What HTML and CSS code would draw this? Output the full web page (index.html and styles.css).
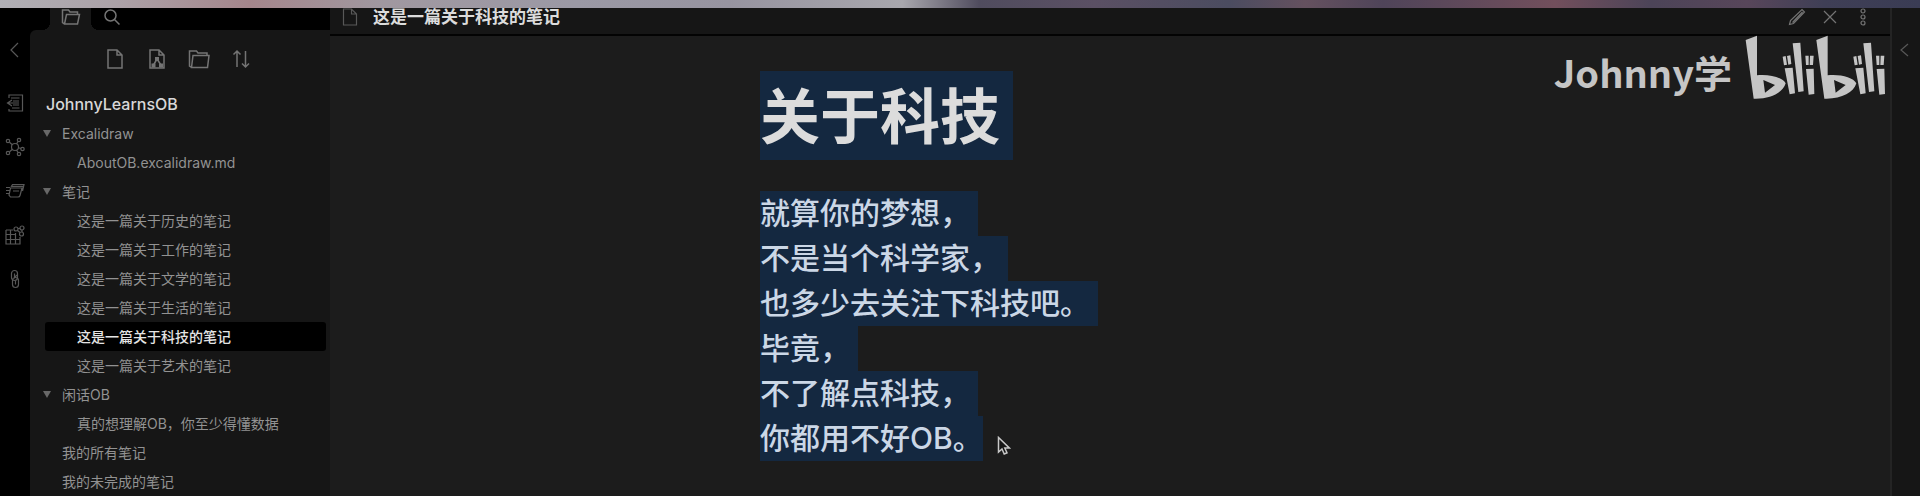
FILE: index.html
```
<!DOCTYPE html>
<html lang="zh-CN">
<head>
<meta charset="utf-8">
<title>这是一篇关于科技的笔记</title>
<link rel="stylesheet" href="styles.css">
</head>
<body>
<div class="desktop-strip"></div>
<div class="app">
  <nav class="ribbon" aria-label="功能区">
    <button class="icon-btn ribbon-toggle" aria-label="收起侧栏"><svg class="icon dim" width="18" height="18" viewBox="0 0 18 18"><path d="M12 2 5 9l7 7"/></svg></button>
    <button class="icon-btn" aria-label="快速切换"><svg class="icon dim" width="18" height="20" viewBox="0 0 18 20"><path d="M3 5V2h13.500v16H3v-2M5 5h8.500M6 15h7.500M7 8h6M7 10h6M7 12h6M6 7l-4.500 3L6 13M1.500 10H7"/></svg></button>
    <button class="icon-btn" aria-label="关系图谱"><svg class="icon dim" width="20" height="20" viewBox="0 0 20 20"><circle cx="10" cy="10" r="3.500"/><circle cx="3" cy="4" r="1.700"/><circle cx="14" cy="3" r="1.700"/><circle cx="3" cy="16" r="1.700"/><circle cx="14" cy="17" r="1.700"/><circle cx="17.500" cy="12" r="1.700"/><path d="m4.500 5.200 2.800 2.500M13 4.500 11.500 7M4.500 14.800l3-2.500M11.500 13l1.500 2.500M13.500 10.700l2.400.8"/></svg></button>
    <button class="icon-btn" aria-label="卡片"><svg class="icon dim" width="20" height="16" viewBox="0 0 20 16"><path d="M6 4 7.500 1.500H19L17.500 8M5.500 5H17l-2 7.500a2 2 0 0 1-2 1.500H5.500L4 12zM1 4.500h4M1 7.500h3.500M1 10.500h3M7 3.300h11M8 8h6"/></svg></button>
    <button class="icon-btn" aria-label="表格"><svg class="icon dim" width="20" height="20" viewBox="0 0 20 20"><path d="M1 5h7M1 5v14h14v-7M1 9.500h10M1 14.500h14M5.500 5v14M10.500 8v11"/><circle cx="11" cy="4" r="2"/><circle cx="17" cy="3" r="2"/><circle cx="16.500" cy="9" r="2"/><path d="m12.500 5.500 2.500 2M13 3.500h2M17 5v2"/></svg></button>
    <button class="icon-btn" aria-label="命令"><svg class="icon dim" width="12" height="20" viewBox="0 0 12 20"><rect x="2.500" y="1.500" width="6" height="10" rx="3"/><rect x="3.500" y="8.500" width="6" height="10" rx="3"/><path d="M5.500 4.500v4L8 6M6.500 11.500v4"/></svg></button>
  </nav>

  <aside class="sidebar">
    <div class="tabs">
      <button class="icon-btn tab active" aria-label="文件"><svg class="icon" width="20" height="18" viewBox="0 0 20 18"><path d="M3.500 16 1.500 14.500V2h6l1.500 2h7.500v2.500M3.500 16 5.500 6.500H18.500L16.500 16z"/></svg></button>
      <button class="icon-btn tab" aria-label="搜索"><svg class="icon" width="18" height="18" viewBox="0 0 18 18"><circle cx="7.500" cy="7.500" r="5.500"/><path d="m11.500 11.500 5 5"/></svg></button>
    </div>
    <div class="files">
      <div class="toolbar">
        <button class="icon-btn" aria-label="新建笔记"><svg class="icon" width="18" height="22" viewBox="0 0 18 22"><path d="M2 2h9l5 5v13H2zM11 2v5h5"/></svg></button>
        <button class="icon-btn" aria-label="新建绘图"><svg class="icon" width="18" height="22" viewBox="0 0 18 22"><path d="M2 2h9l5 5v13H2zM11 2v5h5"/><path class="solid" d="M7 9h4v4H7zM3.500 15.500h4v4h-4zM11 15.500h4v4h-4z"/><path d="m9 11-3.500 6M9 11l4 6"/></svg></button>
        <button class="icon-btn" aria-label="新建文件夹"><svg class="icon" width="22" height="22" viewBox="0 0 22 22"><path d="M3.500 19.500 1.500 18V3h7l1.500 2h9v2.500M3.500 19.500l1.500-12h16l-1.500 12z"/></svg></button>
        <button class="icon-btn" aria-label="排序"><svg class="icon" width="20" height="22" viewBox="0 0 20 22"><path d="M6 19V3M2.500 6.500 6 3l3.500 3.500M14.500 3v16M11 15.500l3.500 3.500 3.500-3.500"/></svg></button>
      </div>
      <h2 class="vault">JohnnyLearnsOB</h2>
      <ul class="tree">
        <li><a href="#" class="row folder"><span class="caret"></span>Excalidraw</a>
          <ul>
            <li><a href="#" class="row note">AboutOB.excalidraw.md</a></li>
          </ul>
        </li>
        <li><a href="#" class="row folder"><span class="caret"></span>笔记</a>
          <ul>
            <li><a href="#" class="row note">这是一篇关于历史的笔记</a></li>
            <li><a href="#" class="row note">这是一篇关于工作的笔记</a></li>
            <li><a href="#" class="row note">这是一篇关于文学的笔记</a></li>
            <li><a href="#" class="row note">这是一篇关于生活的笔记</a></li>
            <li><a href="#" class="row note current">这是一篇关于科技的笔记</a></li>
            <li><a href="#" class="row note">这是一篇关于艺术的笔记</a></li>
          </ul>
        </li>
        <li><a href="#" class="row folder"><span class="caret"></span>闲话OB</a>
          <ul>
            <li><a href="#" class="row note">真的想理解OB，你至少得懂数据</a></li>
          </ul>
        </li>
        <li><a href="#" class="row">我的所有笔记</a></li>
        <li><a href="#" class="row">我的未完成的笔记</a></li>
      </ul>
    </div>
  </aside>

  <main class="pane">
    <header class="pane-header">
      <svg class="icon dim" width="16" height="20" viewBox="0 0 16 20"><path d="M1.500 2h8l5 5v11h-13zM9.500 2v5h5"/></svg>
      <span class="pane-title">这是一篇关于科技的笔记</span>
      <div class="pane-actions">
        <button class="icon-btn" aria-label="编辑"><svg class="icon thin" width="18" height="18" viewBox="0 0 18 18"><path d="m1.500 16.500 1-4L14 1.500l2.500 2.500L5.500 15.500zM4.500 14.500 14.500 4"/></svg></button>
        <button class="icon-btn" aria-label="关闭"><svg class="icon thin" width="18" height="18" viewBox="0 0 18 18"><path d="m3 3 12 12M15 3 3 15"/></svg></button>
        <button class="icon-btn" aria-label="更多"><svg class="icon thin" width="18" height="18" viewBox="0 0 18 18"><circle cx="9" cy="3" r="2"/><circle cx="9" cy="9" r="2"/><circle cx="9" cy="15" r="2"/></svg></button>
      </div>
    </header>
    <article class="note-body">
      <h1><span class="sel">关于科技</span></h1>
      <p>
        <span class="sel">就算你的梦想，</span>
        <span class="sel">不是当个科学家，</span>
        <span class="sel">也多少去关注下科技吧。</span>
        <span class="sel">毕竟，</span>
        <span class="sel">不了解点科技，</span>
        <span class="sel last">你都用不好OB。</span>
      </p>
      <svg class="pointer" width="14" height="20" viewBox="0 0 14 20"><path d="M1.500 1.500v14.500l3.500-3 2.200 5 2.800-1.200-2.200-4.800h4.500z"/></svg>
    </article>
    <div class="watermark">
      <span>Johnny学</span>
      <svg width="142" height="66" viewBox="12 12 426 198" role="img" aria-label="bilibili">
        <defs>
          <g id="mark-half">
            <path fill-rule="evenodd" d="M14 30 48 17 48 136C85 132 125 142 134 160C126 188 88 208 38 206ZM67 150 72 188 102 165Z"/>
            <path d="M125 80 134 78 138 104 129 106ZM138 78 148 76 151 102 142 104ZM131 115 155 113 162 190 146 193ZM155 40 178 38 188 184 172 186ZM193 77 203 77 203 105 195 105ZM207 77 218 77 216 105 206 105ZM195 117 218 116 220 192 203 194Z"/>
          </g>
        </defs>
        <use href="#mark-half"/>
        <use href="#mark-half" x="212"/>
      </svg>
    </div>
  </main>

  <nav class="ribbon ribbon-right" aria-label="右侧栏">
    <button class="icon-btn ribbon-toggle" aria-label="展开侧栏"><svg class="icon dim" width="18" height="18" viewBox="0 0 18 18"><path d="M12 3 5 9l7 6"/></svg></button>
  </nav>
</div>
</body>
</html>
```
FILE: styles.css
```
* { box-sizing: border-box; }

body {
  margin: 0;
  height: 100vh;
  display: flex;
  flex-direction: column;
  overflow: hidden;
  background: #000;
  color: #929292;
  font-family: Inter, "Noto Sans CJK SC", sans-serif;
  font-size: 14px;
}

h1, h2, p, ul { margin: 0; padding: 0; }
ul { list-style: none; }
a { color: inherit; text-decoration: none; }

.desktop-strip {
  flex: none;
  height: 8px;
  background: linear-gradient(90deg, #b0afb5 0%, #aca2a8 6%, #a5868c 13%, #a098a0 20%, #9b99a5 30%, #9794a0 38%, #a8a7ad 47%, #504c5e 51%, #5b5064 57%, #4b4c60 64%, #65515f 68%, #4f4459 72%, #724f5c 81%, #4c4458 86%, #58465a 91%, #3f3f56 95%, #3a3c54 100%);
}

.app { flex: 1; display: flex; min-height: 0; }

.icon-btn {
  display: flex;
  align-items: center;
  justify-content: center;
  padding: 0;
  border: 0;
  background: none;
  color: inherit;
}

.icon {
  flex: none;
  fill: none;
  stroke: #747474;
  stroke-width: 1.5;
}
.icon.thin { stroke-width: 1.2; }
.icon.dim { stroke: #585858; stroke-width: 1.2; }
.icon .solid { fill: #747474; stroke: none; }

.ribbon {
  flex: none;
  width: 30px;
  padding-top: 20px;
  background: #000;
}
.ribbon .icon-btn { width: 30px; height: 44px; }
.ribbon .ribbon-toggle { margin-bottom: 9px; }
.ribbon-right { background: #161616; border-left: 2px solid #242424; }
.ribbon-right .icon-btn { width: 26px; }

.sidebar {
  flex: none;
  width: 300px;
  display: flex;
  flex-direction: column;
}
.tabs { flex: none; display: flex; height: 22px; padding-left: 20px; }
.tab { width: 41px; height: 18px; }
.tab.active {
  position: relative;
  height: 22px;
  padding-bottom: 4px;
  background: #161616;
}
/* flared feet of the active tab */
.tab.active::before,
.tab.active::after {
  content: "";
  position: absolute;
  bottom: 0;
  width: 8px;
  height: 8px;
}
.tab.active::before { right: 100%; background: radial-gradient(circle at 0 0, #000 8px, #161616 8px); }
.tab.active::after { left: 100%; background: radial-gradient(circle at 100% 0, #000 8px, #161616 8px); }

.files {
  flex: 1;
  min-height: 0;
  overflow: hidden;
  padding: 18px 4px 0 15px;
  background: #161616;
  border-radius: 6px 0 0 0;
}
.toolbar { display: flex; justify-content: center; gap: 20px; padding-right: 15px; }
.toolbar .icon-btn { width: 22px; height: 22px; }
.vault {
  margin-top: 20px;
  padding-left: 1px;
  color: #d8d8d8;
  font-size: 16px;
  font-weight: 500;
  line-height: 29px;
}

.row {
  display: flex;
  align-items: center;
  height: 29px;
  padding-left: 17px;
  border-radius: 3px;
  line-height: 28px;
  white-space: nowrap;
}
.row.folder { padding-left: 0; }
.row.note { padding-left: 32px; }
.row.current { background: #000; color: #e4e4e4; font-weight: 500; }
.caret {
  margin-right: 11px;
  margin-left: -2px;
  border: solid transparent;
  border-width: 7px 4px 0;
  border-top-color: #686868;
}

.pane {
  position: relative;
  flex: 1;
  min-width: 0;
  background: #1c1c1c;
}
.pane-header {
  display: flex;
  align-items: center;
  height: 28px;
  padding: 0 18px 8px 12px;
  background: #161616;
  border-bottom: 2px solid #030303;
}
.pane-title {
  flex: 1;
  padding-left: 15px;
  color: #dcdcdc;
  font-size: 17px;
  font-weight: 700;
  line-height: 18px;
}
.pane-actions { display: flex; gap: 15px; }

.note-body {
  position: relative;
  max-width: 700px;
  margin: 0 auto;
  padding-top: 35px;
}
.sel {
  display: block;
  width: fit-content;
  padding-right: 8px;
  background: #142840;
}
.sel.last { padding-right: 0; }
.note-body h1 {
  margin-bottom: 31px;
  color: #dcdcdc;
  font-size: 60px;
  font-weight: 700;
  line-height: 85px;
}
.note-body h1 .sel { padding-top: 4px; padding-right: 13px; }
.note-body p {
  color: #cbd7e6;
  font-size: 30px;
  font-weight: 500;
  line-height: 45px;
}
.pointer {
  position: absolute;
  left: 237px;
  top: 400px;
  fill: #161616;
  stroke: #c8c8c8;
  stroke-width: 1.5;
}

.watermark {
  position: absolute;
  top: 26px;
  right: 3px;
  display: flex;
  align-items: flex-start;
  gap: 13px;
  color: #c5c5c5;
  font-family: "Noto Sans CJK SC", sans-serif;
  font-size: 38px;
  font-weight: 700;
  line-height: 76px;
}
.watermark svg { fill: #c5c5c5; }
```
